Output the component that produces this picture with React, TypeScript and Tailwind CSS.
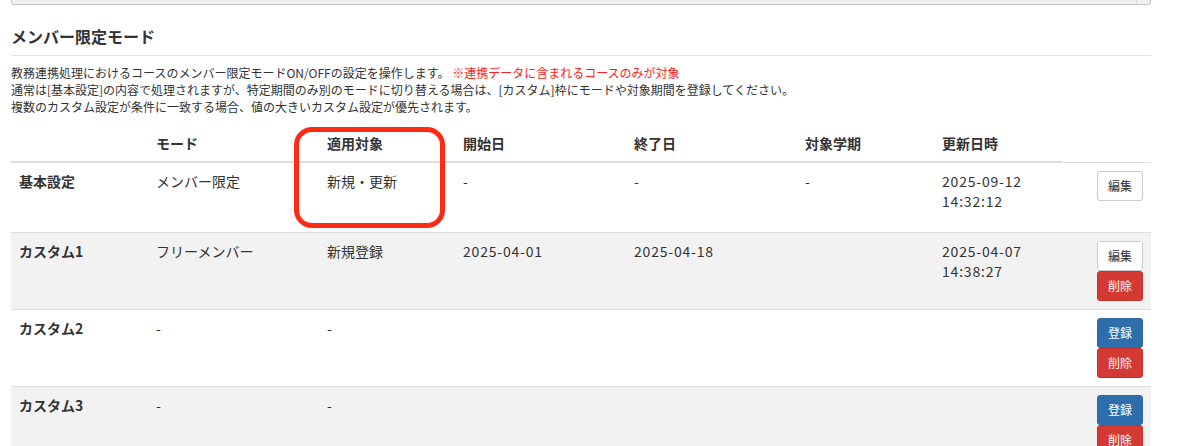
import React from "react";

type Row = {
  label: string;
  mode: string;
  target: string;
  start: string;
  end: string;
  term: string;
  updated: string[];
  buttons: ("edit" | "reg" | "del")[];
  striped: boolean;
  h: string;
};

const rows: Row[] = [
  { label: "基本設定", mode: "メンバー限定", target: "新規・更新", start: "-", end: "-", term: "-", updated: ["2025-09-12", "14:32:12"], buttons: ["edit"], striped: false, h: "h-[70px]" },
  { label: "カスタム1", mode: "フリーメンバー", target: "新規登録", start: "2025-04-01", end: "2025-04-18", term: "", updated: ["2025-04-07", "14:38:27"], buttons: ["edit", "del"], striped: true, h: "h-[77px]" },
  { label: "カスタム2", mode: "-", target: "-", start: "", end: "", term: "", updated: [], buttons: ["reg", "del"], striped: false, h: "h-[77px]" },
  { label: "カスタム3", mode: "-", target: "-", start: "", end: "", term: "", updated: [], buttons: ["reg", "del"], striped: true, h: "h-[77px]" },
];

function Btn({ kind }: { kind: "edit" | "reg" | "del" }) {
  if (kind === "edit")
    return (
      <button className="w-[46px] h-[30px] border border-[#cccccc] rounded-[3px] bg-white text-[12px] text-[#333] leading-none">
        編集
      </button>
    );
  if (kind === "reg")
    return (
      <button className="w-[46px] h-[30px] border border-[#2e6da4] rounded-[3px] bg-[#2f6eac] text-[12px] text-white leading-none">
        登録
      </button>
    );
  return (
    <button className="w-[46px] h-[30px] border border-[#c9302c] rounded-[3px] bg-[#d23a33] text-[12px] text-white leading-none">
      削除
    </button>
  );
}

export default function App() {
  return (
    <div className="relative w-[1180px] h-[446px] overflow-hidden bg-white text-[#333] font-['Noto_Sans_CJK_JP',sans-serif]">
      <div className="pl-[11px] w-[1151px]">
        <div className="w-[1140px] h-[5px] border border-t-0 border-[#c4c4c4] bg-[#f1f1f1] rounded-b-[3px] flex justify-end">
          <div className="w-[14px] border-l border-[#d8d8d8]" />
        </div>
        <h2 className="mt-[20px] text-[16px] font-bold leading-[22px]">メンバー限定モード</h2>
        <div className="mt-[8px] border-t border-[#e5e5e5]" />
        <div className="mt-[8px] text-[12px] leading-[17px]">
          <p>
            教務連携処理におけるコースのメンバー限定モードON/OFFの設定を操作します。{" "}
            <span className="text-[#ff1a1a]">※連携データに含まれるコースのみが対象</span>
          </p>
          <p>通常は[基本設定]の内容で処理されますが、特定期間のみ別のモードに切り替える場合は、[カスタム]枠にモードや対象期間を登録してください。</p>
          <p>複数のカスタム設定が条件に一致する場合、値の大きいカスタム設定が優先されます。</p>
        </div>
        <table className="mt-[10px] w-[1140px] table-fixed border-collapse text-[14px] leading-[20px]">
          <colgroup>
            <col className="w-[137px]" />
            <col className="w-[171px]" />
            <col className="w-[136px]" />
            <col className="w-[171px]" />
            <col className="w-[171px]" />
            <col className="w-[137px]" />
            <col className="w-[128px]" />
            <col className="w-[89px]" />
          </colgroup>
          <thead>
            <tr>
              <th className="border-b-2 border-[#dddddd] p-2 text-left font-bold"></th>
              <th className="border-b-2 border-[#dddddd] p-2 text-left font-bold">モード</th>
              <th className="border-b-2 border-[#dddddd] p-2 text-left font-bold">適用対象</th>
              <th className="border-b-2 border-[#dddddd] p-2 text-left font-bold">開始日</th>
              <th className="border-b-2 border-[#dddddd] p-2 text-left font-bold">終了日</th>
              <th className="border-b-2 border-[#dddddd] p-2 text-left font-bold">対象学期</th>
              <th className="border-b-2 border-[#dddddd] p-2 text-left font-bold">更新日時</th>
            </tr>
          </thead>
          <tbody>
            {rows.map((r, i) => (
              <tr key={i} className={`${r.h} ${r.striped ? "bg-[#f2f2f2]" : "bg-white"}`}>
                <td className="border-t border-[#dddddd] p-2 align-top font-bold">{r.label}</td>
                <td className="border-t border-[#dddddd] p-2 align-top">{r.mode}</td>
                <td className="border-t border-[#dddddd] p-2 align-top">{r.target}</td>
                <td className="border-t border-[#dddddd] p-2 align-top tracking-[0.8px]">{r.start}</td>
                <td className="border-t border-[#dddddd] p-2 align-top tracking-[0.8px]">{r.end}</td>
                <td className="border-t border-[#dddddd] p-2 align-top">{r.term}</td>
                <td className="border-t border-[#dddddd] p-2 align-top tracking-[0.8px]">
                  {r.updated.map((u, j) => (
                    <div key={j}>{u}</div>
                  ))}
                </td>
                <td className="border-t border-[#dddddd] p-2 align-top">
                  <div className="flex flex-col items-end">
                    {r.buttons.map((b, j) => (
                      <Btn key={j} kind={b} />
                    ))}
                  </div>
                </td>
              </tr>
            ))}
          </tbody>
        </table>
      </div>
      <div className="absolute left-[294px] top-[127px] w-[151px] h-[101px] border-[5px] border-[#ff2a14] rounded-[18px]" />
    </div>
  );
}
